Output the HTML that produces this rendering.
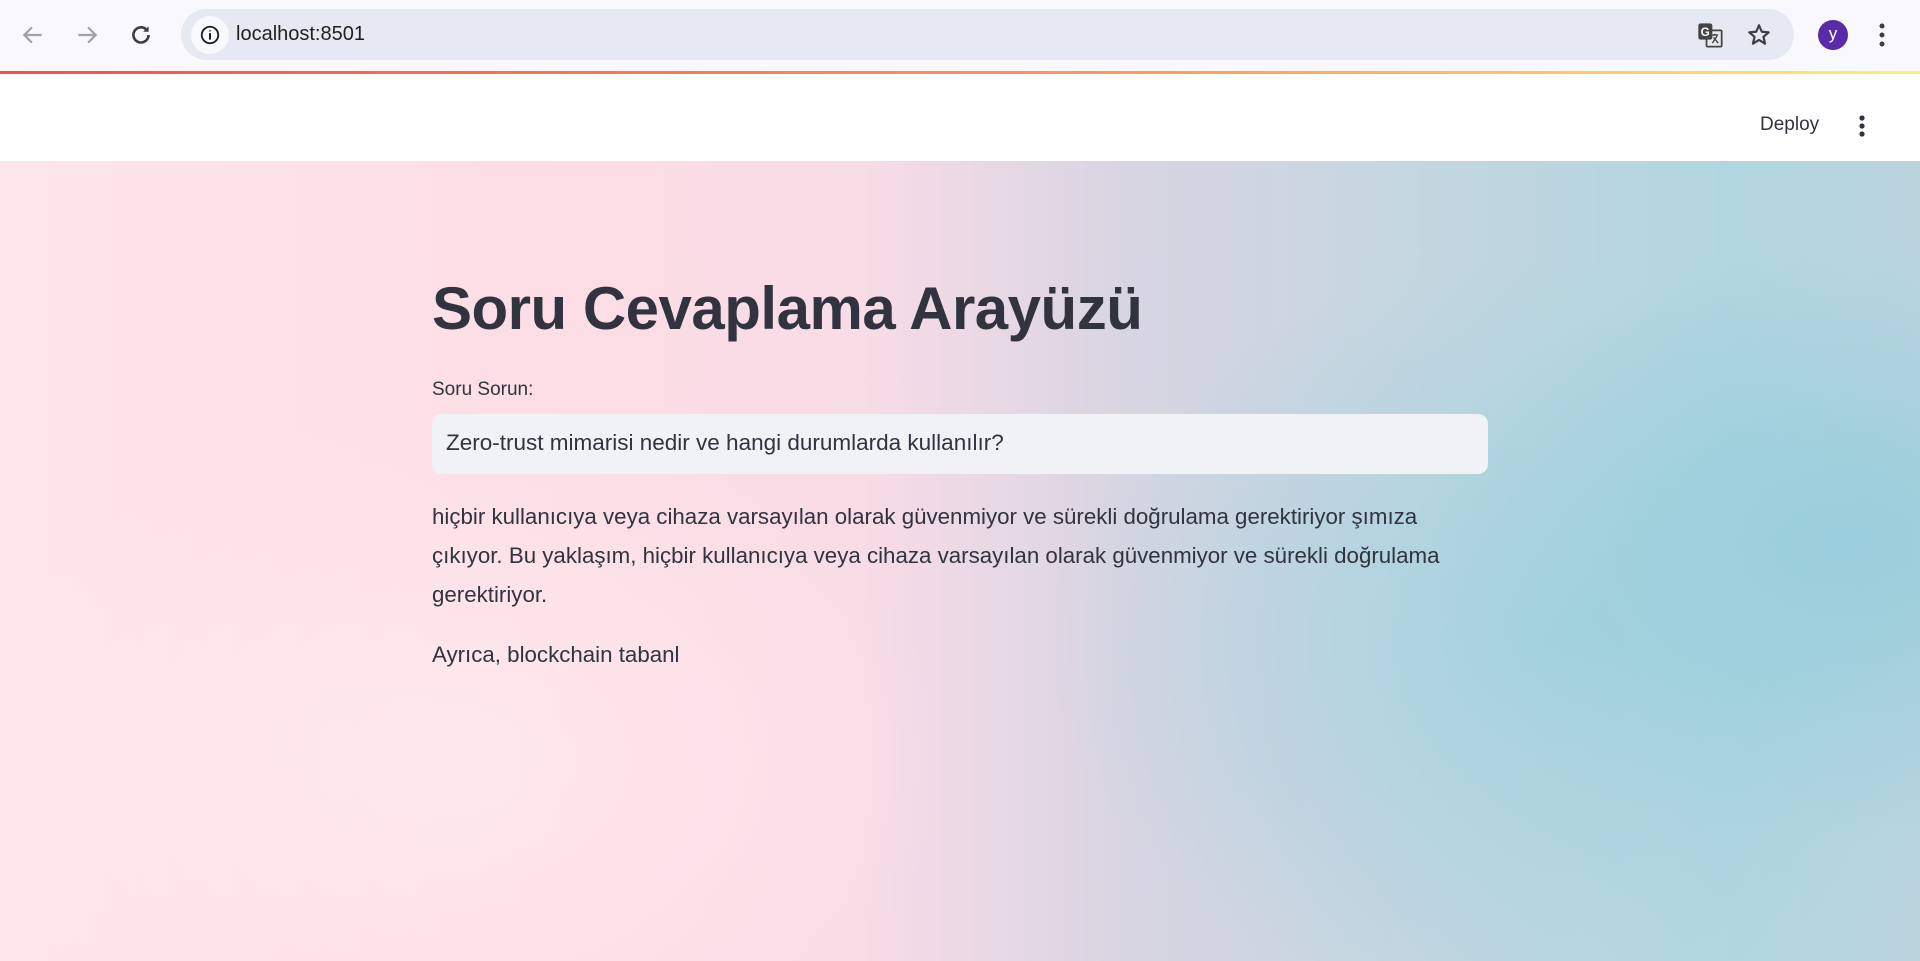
<!DOCTYPE html>
<html><head><meta charset="utf-8"><style>
*{margin:0;padding:0;box-sizing:border-box}
body{width:1920px;height:961px;overflow:hidden;font-family:"Liberation Sans",sans-serif;position:relative;background:#fff}
.chrome{position:absolute;left:0;top:0;width:1920px;height:71px;background:#f8f8fd}
.addr{position:absolute;left:181px;top:9px;width:1613px;height:51px;border-radius:26px;background:#e6e9f4}
.info{position:absolute;left:10px;top:7px;width:38px;height:38px;border-radius:50%;background:#f8f9fd}
.url{position:absolute;left:55px;top:14px;font-size:20px;color:#1f1f1f}
.bar{position:absolute;left:0;top:71px;width:1920px;height:3px;background:linear-gradient(90deg,#ff4b4b,#ff9a5a 60%,#fff06b)}
.header{position:absolute;left:0;top:74px;width:1920px;height:87px;background:#fff}
.main{position:absolute;left:0;top:161px;width:1920px;height:800px;
background:
radial-gradient(ellipse 420px 300px at 1850px 380px,rgba(150,205,220,.85),transparent),
radial-gradient(ellipse 500px 380px at 1550px 480px,rgba(160,210,222,.8),transparent),
radial-gradient(ellipse 500px 350px at 450px 600px,rgba(255,235,240,.8),transparent),
linear-gradient(90deg,#ffe6ec 0%,#fddde5 30%,#f8dce6 45%,#d9d5e3 58%,#c2d6e0 75%,#b2d6df 90%,#bad4de 100%);}
h1{position:absolute;left:432px;top:274px;font-size:60px;font-weight:bold;color:#31333f;letter-spacing:-0.5px}
.lbl{position:absolute;left:432px;top:379px;font-size:19px;color:#31333f}
.inp{position:absolute;left:432px;top:414px;width:1056px;height:60px;border-radius:10px;background:#f0f2f6;font-size:22.5px;color:#31333f;padding:16px 14px}
.p{position:absolute;left:432px;top:497px;width:1060px;font-size:22.3px;line-height:39px;color:#31333f}
.p2{position:absolute;left:432px;top:642px;font-size:22.3px;color:#31333f}
</style></head><body>
<div class="chrome">
<svg style="position:absolute;left:20px;top:22px" width="26" height="26" viewBox="0 0 24 24"><path d="M20 12H5M11 5l-7 7 7 7" stroke="#a0a0a6" stroke-width="2" fill="none"/></svg>
<svg style="position:absolute;left:74px;top:22px" width="26" height="26" viewBox="0 0 24 24"><path d="M4 12h15M13 5l7 7-7 7" stroke="#a0a0a6" stroke-width="2" fill="none"/></svg>
<svg style="position:absolute;left:128px;top:22px" width="26" height="26" viewBox="0 0 24 24"><path d="M19 12a7 7 0 1 1-2-5" stroke="#3c3c44" stroke-width="2.4" fill="none"/><path d="M19 4v5h-5z" fill="#3c3c44"/></svg>
<div class="addr"><div class="info"><svg style="position:absolute;left:8px;top:8px" width="22" height="22" viewBox="0 0 24 24"><circle cx="12" cy="12" r="9" stroke="#1f1f1f" stroke-width="2" fill="none"/><path d="M12 10v7M12 7v1" stroke="#1f1f1f" stroke-width="2.2"/></svg></div><div class="url">localhost:8501</div>
<svg style="position:absolute;left:1515px;top:12px" width="28" height="28" viewBox="0 0 24 24"><rect x="2" y="2" width="12" height="14" rx="2" fill="#444"/><rect x="9" y="8" width="13" height="14" rx="1" fill="none" stroke="#444" stroke-width="1.5"/><text x="4" y="13" font-size="10" font-weight="bold" fill="#fff" font-family="Liberation Sans">G</text><path d="M13 12h6M16 11v1M14 19l4-6M15 14l4 5" stroke="#444" stroke-width="1.2" fill="none"/></svg>
<svg style="position:absolute;left:1565px;top:13px" width="26" height="26" viewBox="0 0 24 24"><path d="M12 3l2.6 6 6.4.5-4.9 4.2 1.5 6.3L12 16.6 6.4 20l1.5-6.3L3 9.5 9.4 9z" stroke="#3c3c44" stroke-width="2" fill="none" stroke-linejoin="round"/></svg>
</div>
<div style="position:absolute;left:1818px;top:20px;width:30px;height:30px;border-radius:50%;background:#5b2aa8;color:#fff;font-size:17px;text-align:center;line-height:28px">y</div>
<svg style="position:absolute;left:1878px;top:22px" width="8" height="26" viewBox="0 0 8 26"><circle cx="4" cy="4" r="2.5" fill="#3c3c44"/><circle cx="4" cy="13" r="2.5" fill="#3c3c44"/><circle cx="4" cy="22" r="2.5" fill="#3c3c44"/></svg>
</div>
<div class="bar"></div>
<div class="header">
<div style="position:absolute;left:1760px;top:40px;font-size:19px;color:#31333f">Deploy</div>
<svg style="position:absolute;left:1858px;top:40px" width="8" height="24" viewBox="0 0 8 24"><circle cx="4" cy="4" r="2.6" fill="#31333f"/><circle cx="4" cy="12" r="2.6" fill="#31333f"/><circle cx="4" cy="20" r="2.6" fill="#31333f"/></svg>
</div>
<div class="main"></div>
<h1>Soru Cevaplama Arayüzü</h1>
<div class="lbl">Soru Sorun:</div>
<div class="inp">Zero-trust mimarisi nedir ve hangi durumlarda kullanılır?</div>
<div class="p">hiçbir kullanıcıya veya cihaza varsayılan olarak güvenmiyor ve sürekli doğrulama gerektiriyor şımıza<br>çıkıyor. Bu yaklaşım, hiçbir kullanıcıya veya cihaza varsayılan olarak güvenmiyor ve sürekli doğrulama<br>gerektiriyor.</div>
<div class="p2">Ayrıca, blockchain tabanl</div>
</body></html>
